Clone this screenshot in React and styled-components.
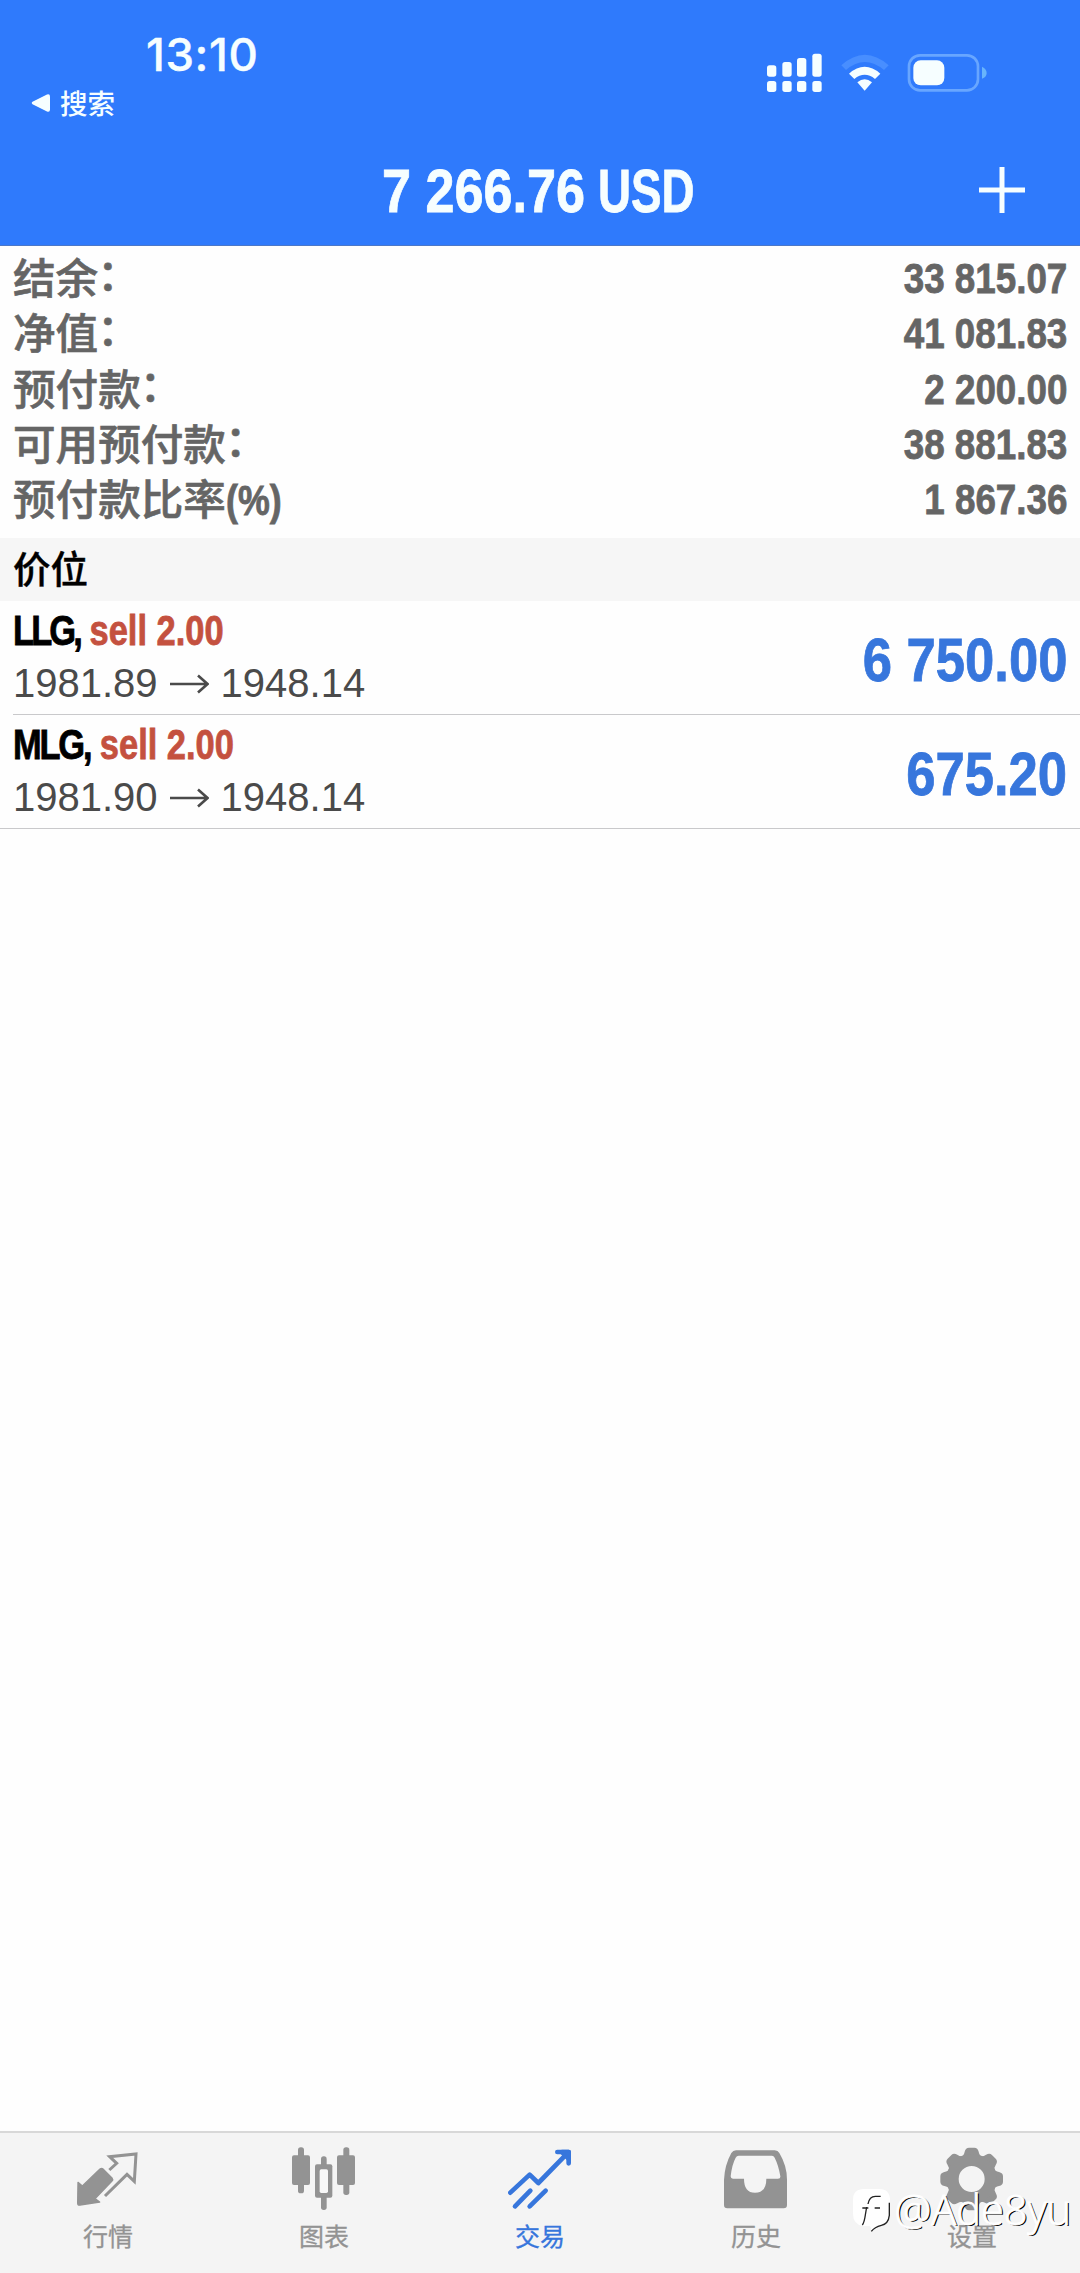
import React from "react";
import styled, { createGlobalStyle } from "styled-components";

const GlobalStyle = createGlobalStyle`
  :root {
    --color-header: #2f7afc;
    --color-blue: #3776dc;
    --color-red: #c4513f;
    --color-label: #656565;
    --color-tab: #939393;
    --font-sans: "Liberation Sans", "Noto Sans CJK SC", sans-serif;
    --font-cjk: "Noto Sans CJK SC", sans-serif;
  }

  * {
    box-sizing: border-box;
  }

  body {
    margin: 0;
    background: #fefefe;
  }
`;

const Screen = styled.div`
  position: relative;
  display: flex;
  flex-direction: column;
  width: 1080px;
  height: 2273px;
  overflow: hidden;
  background: #fefefe;
`;

const Header = styled.header`
  display: flex;
  flex-direction: column;
  height: 246px;
  color: #f6feff;
  background: var(--color-header);
  border-bottom: 1px solid #4c78c8;
`;

const StatusBar = styled.div`
  display: flex;
  justify-content: space-between;
  height: 134px;
  padding: 27px 93px 0 31px;
`;

const Clock = styled.div`
  padding: 1px 0 0 115px;
  font-family: Inter, sans-serif;
  font-size: 45.5px;
  font-weight: 500;
  letter-spacing: 0.6px;
  line-height: 54px;
  -webkit-text-stroke: 0.4px currentColor;
`;

const BackLink = styled.div`
  display: flex;
  align-items: center;
  gap: 10px;
  height: 42px;
  font-family: var(--font-cjk);
  font-size: 27.5px;
  font-weight: 500;
  line-height: 40px;

  span {
    height: 42px;
  }
`;

const StatusIcons = styled.svg`
  width: 220px;
  height: 40px;
  margin-top: 26px;
`;

const TitleBar = styled.div`
  display: grid;
  grid-template-columns: 1fr auto 1fr;
  align-items: center;
  height: 111px;
  padding: 0 55px;
`;

// Condensed face: the spans are narrowed and the leftover width is pulled back in
const Condensed = styled.span`
  display: inline-block;
  margin-right: ${({ $pull }) => $pull || 0}px;
  font-family: var(--font-sans);
  font-weight: 700;
  white-space: nowrap;
  transform: scaleX(${({ $scale }) => $scale || 0.855});
  transform-origin: ${({ $from }) => $from || "left"} center;
  -webkit-text-stroke: 0.8px currentColor;
`;

const Title = styled.h1`
  display: flex;
  grid-column: 2;
  gap: 15px;
  margin: 0;
  padding: 3px 3px 0 0;
  font-size: 61px;
  line-height: 70px;
`;

const AddButton = styled.button`
  display: flex;
  justify-self: end;
  padding: 0;
  border: 0;
  color: inherit;
  background: none;
`;

const Summary = styled.dl`
  height: 292px;
  margin: 0;
  padding: 5px 13px 0;
`;

const SummaryRow = styled.div`
  display: flex;
  justify-content: space-between;
  height: 55.3px;
  color: var(--color-label);
  line-height: 55px;
`;

const Label = styled.dt`
  margin-top: -3px;
  font-family: var(--font-cjk);
  font-size: 42.6px;
  font-weight: 500;
  -webkit-text-stroke: 0.6px currentColor;
`;

const Colon = styled.span`
  margin-left: -1px;
  line-height: 1;
  vertical-align: 4px;
`;

const Amount = styled.dd`
  margin: 0;
  font-size: 43px;
`;

const SectionTitle = styled.h2`
  height: 63px;
  margin: 0;
  padding-left: 13px;
  font-family: var(--font-cjk);
  font-size: 37.5px;
  font-weight: 500;
  line-height: 57px;
  color: #000;
  background: #f6f6f6;
  -webkit-text-stroke: 0.4px currentColor;
`;

const Positions = styled.ul`
  flex: 1;
  margin: 0;
  padding: 0;
  list-style: none;
`;

const Position = styled.li`
  display: flex;
  align-items: center;
  justify-content: space-between;
  height: 114px;
  margin-left: ${({ $last }) => ($last ? "0" : "13px")};
  padding: 0 13px 0 ${({ $last }) => ($last ? "13px" : "0")};
  border-bottom: 1px solid #c9c9cb;
`;

const Deal = styled.div`
  font-size: 42px;
  line-height: 52px;
  color: #000;
`;

const Ticker = styled.span`
  letter-spacing: ${({ $tight }) => ($tight ? "-3.5px" : "-2.7px")};
`;

const Side = styled.span`
  color: var(--color-red);
`;

const Prices = styled.div`
  display: flex;
  align-items: center;
  gap: 12px;
  font-family: var(--font-sans);
  font-size: 40px;
  line-height: 53px;
  color: #4a4a4a;
`;

const Profit = styled.div`
  padding-top: 4px;
  font-size: 61.5px;
  color: var(--color-blue);
`;

const TabBar = styled.nav`
  display: grid;
  grid-template-columns: repeat(5, 1fr);
  height: 142px;
  border-top: 2px solid #d8d8d8;
  background: #f4f4f4;
`;

const Tab = styled.a`
  display: flex;
  flex-direction: column;
  align-items: center;
  padding-top: 14px;
  font-family: var(--font-cjk);
  font-size: 25px;
  line-height: 36px;
  color: ${({ $active }) => ($active ? "var(--color-blue)" : "var(--color-tab)")};
  -webkit-text-stroke: 0.3px currentColor;

  svg {
    width: 64px;
    height: 64px;
    margin-bottom: 6px;
  }
`;

const Watermark = styled.div`
  position: absolute;
  right: 9px;
  bottom: 37px;
  display: flex;
  align-items: center;
  gap: 5px;
  font-family: "Open Sans", sans-serif;
  font-size: 41.5px;
  font-weight: 300;
  line-height: 54px;
  color: #fff;
  text-shadow: 1.5px 1px 0.5px #000;
  -webkit-text-stroke: 0.9px #fff;

  svg {
    margin-top: 3px;
  }
`;

const summary = [
  { label: "结余", colon: true, value: "33 815.07" },
  { label: "净值", colon: true, value: "41 081.83" },
  { label: "预付款", colon: true, value: "2 200.00" },
  { label: "可用预付款", colon: true, value: "38 881.83" },
  { label: "预付款比率", unit: "(%)", value: "1 867.36" },
];

const positions = [
  { symbol: "LLG", tight: true, side: "sell 2.00", open: "1981.89", current: "1948.14", profit: "6 750.00" },
  { symbol: "MLG", side: "sell 2.00", open: "1981.90", current: "1948.14", profit: "675.20" },
];

const QuotesIcon = () => (
  <svg viewBox="228 112 192 192" fill="none">
    <path
      d="M234 218l13 11 53-51q5-4 9 0l27 27q4 5 0 9l-51 53 14 10-59 9q-7 2-7-5z"
      fill="currentColor"
      stroke="currentColor"
      strokeWidth="4"
      strokeLinejoin="round"
    />
    <path d="M328 181l22-20-21-20 79-8-5 82-22-21-66 65" stroke="currentColor" strokeWidth="9" />
  </svg>
);

const ChartIcon = () => (
  <svg viewBox="876 112 192 192" fill="currentColor">
    <rect x="894" y="113" width="18" height="138" rx="8" />
    <rect x="876" y="137" width="54" height="89" rx="6" />
    <rect x="1030" y="113" width="18" height="143" rx="8" />
    <rect x="1011" y="137" width="54" height="89" rx="6" />
    <rect x="963" y="140" width="17" height="40" rx="8" />
    <rect x="963" y="245" width="17" height="56" rx="8" />
    <rect x="945" y="164" width="52" height="100" rx="6" />
    <rect x="959" y="179" width="25" height="71" rx="5" fill="#f8f8f8" />
  </svg>
);

const TradeIcon = () => (
  <svg
    viewBox="324 112 192 192"
    fill="none"
    stroke="currentColor"
    strokeWidth="14"
    strokeLinecap="round"
    strokeLinejoin="round"
  >
    <path d="M331 249l58-54 26 25 89-91" />
    <path d="M472 127h34v34" />
    <path d="M486 127h20v20z" fill="currentColor" />
    <path d="M391 243l-46 47M437 243l-48 47" />
  </svg>
);

const HistoryIcon = () => (
  <svg viewBox="972 112 192 192" fill="currentColor">
    <path
      fillRule="evenodd"
      d="M1008 122h116q10 0 14 8 23 38 23 80v76q0 10-10 10h-169q-10 0-10-10v-76q2-44 22-80 5-8 14-8zM1016 138q-6 0-9 6-11 20-15 56 0 7 7 7h33q0 42 33 42 34 0 34-42h35q8 0 7-7-5-32-17-56-3-6-8-6z"
    />
  </svg>
);

const teeth = [0, 45, 90, 135, 180, 225, 270, 315];

const SettingsIcon = () => (
  <svg viewBox="480 112 192 192" fill="currentColor">
    {teeth.map((angle) => (
      <path
        key={angle}
        d="M543 142q9-4 11-16 3-12 13-12h16q10 0 13 12 2 12 11 16z"
        transform={`rotate(${angle} 575 208)`}
      />
    ))}
    <circle cx="575" cy="208" r="57" fill="none" stroke="currentColor" strokeWidth="36" />
  </svg>
);

const tabs = [
  { label: "行情", Icon: QuotesIcon },
  { label: "图表", Icon: ChartIcon },
  { label: "交易", Icon: TradeIcon, active: true },
  { label: "历史", Icon: HistoryIcon },
  { label: "设置", Icon: SettingsIcon },
];

const App = () => {
  return (
    <Screen>
      <GlobalStyle />
      <Header>
        <StatusBar>
          <div>
            <Clock>13:10</Clock>
            <BackLink>
              <svg width="19" height="18" viewBox="0 0 19 18" fill="currentColor">
                <path d="M1.5 7.8Q0 9 1.5 10.2L16 17.5Q19 18.5 19 15.5V2.5Q19-.5 16 .5z" />
              </svg>
              <span>搜索</span>
            </BackLink>
          </div>
          <StatusIcons viewBox="80 68 660 120" fill="currentColor">
            <rect x="80" y="105" width="28" height="34" rx="8" />
            <rect x="126" y="95" width="28" height="44" rx="8" />
            <rect x="170" y="83" width="28" height="56" rx="8" />
            <rect x="216" y="70" width="28" height="69" rx="8" />
            <rect x="80" y="152" width="28" height="33" rx="8" />
            <rect x="126" y="152" width="28" height="33" rx="8" />
            <rect x="170" y="152" width="28" height="33" rx="8" />
            <rect x="216" y="152" width="28" height="33" rx="8" />
            <path d="M303 105Q373 42 445 105L431 119Q373 71 317 119z" fill="#488eff" />
            <path d="M326 130Q373 89 420 130L404 146Q373 121 342 146z" />
            <path d="M351 156Q373 138 395 156L373 181z" />
            <rect x="506" y="75" width="207" height="105" rx="33" fill="none" stroke="#68a6ff" strokeWidth="8" />
            <rect x="519" y="90" width="93" height="75" rx="22" />
            <path d="M725 109q14 7 14 19t-14 17z" fill="#68b4fb" />
          </StatusIcons>
        </StatusBar>
        <TitleBar>
          <Title>
            <Condensed $pull={-37}>7 266.76</Condensed>
            <Condensed $scale={0.75} $pull={-32}>
              USD
            </Condensed>
          </Title>
          <AddButton aria-label="add">
            <svg width="46" height="46" viewBox="0 0 46 46" stroke="currentColor" strokeWidth="5">
              <path d="M23 0v46M0 23h46" />
            </svg>
          </AddButton>
        </TitleBar>
      </Header>

      <Summary>
        {summary.map(({ label, colon, unit, value }) => (
          <SummaryRow key={label}>
            <Label>
              {label}
              {colon && <Colon>：</Colon>}
              {unit && <Condensed $scale={0.84}>{unit}</Condensed>}
            </Label>
            <Amount>
              <Condensed $from="right">{value}</Condensed>
            </Amount>
          </SummaryRow>
        ))}
      </Summary>

      <SectionTitle>价位</SectionTitle>
      <Positions>
        {positions.map(({ symbol, tight, side, open, current, profit }, index) => (
          <Position key={symbol} $last={index === positions.length - 1}>
            <div>
              <Deal>
                <Condensed $scale={0.82}>
                  <Ticker $tight={tight}>{symbol},</Ticker> <Side>{side}</Side>
                </Condensed>
              </Deal>
              <Prices>
                {open}
                <svg width="39" height="20" viewBox="0 0 39 20" fill="none" stroke="currentColor" strokeWidth="2.6">
                  <path d="M0 10h37M28 1.500l9.500 8.500-9.500 8.500" />
                </svg>
                {current}
              </Prices>
            </div>
            <Profit>
              <Condensed $from="right">{profit}</Condensed>
            </Profit>
          </Position>
        ))}
      </Positions>

      <TabBar>
        {tabs.map(({ label, Icon, active }) => (
          <Tab key={label} $active={active}>
            <Icon />
            {label}
          </Tab>
        ))}
      </TabBar>

      <Watermark>
        <svg width="37" height="43" viewBox="217 249 111 129" fill="none">
          <path
            d="M250 249h46q32 0 32 34v40q0 30-25 36-20 3-31 18 0-17-7-17h-17q-31-4-31-37v-42q0-32 33-32z"
            fill="#fff"
          />
          <path
            d="M245 357q6-8 9-30l4-24M262 294q4-23 22-23h16M245 306h18M282 306h16M326 290v38q-3 26-24 30-20 5-30 18"
            stroke="#222"
            strokeWidth="4"
          />
        </svg>
        @Ade8yu
      </Watermark>
    </Screen>
  );
};

export default App;
